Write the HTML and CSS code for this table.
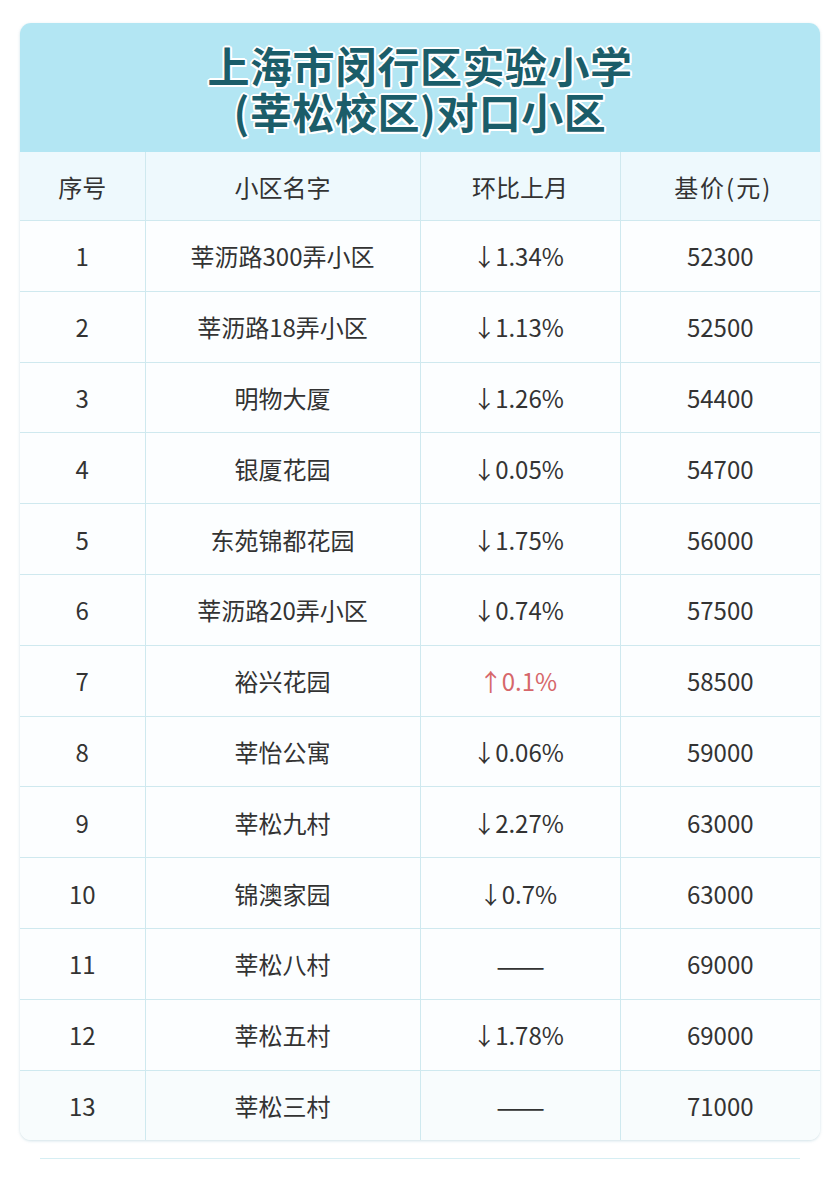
FILE: index.html
```html
<!DOCTYPE html>
<html lang="zh">
<head>
<meta charset="utf-8">
<link rel="stylesheet" href="styles.css">
</head>
<body>
<div class="page">
  <div class="card">
    <div class="title">
      <div class="title-line">上海市闵行区实验小学</div>
      <div class="title-line">(莘松校区)对口小区</div>
    </div>
    <table class="grid">
      <colgroup>
        <col class="c1"><col class="c2"><col class="c3"><col class="c4">
      </colgroup>
      <thead>
        <tr><th>序号</th><th>小区名字</th><th>环比上月</th><th class="price">基价(元)</th></tr>
      </thead>
      <tbody>
        <tr><td>1</td><td>莘沥路300弄小区</td><td><span class="arr">↓</span>1.34%</td><td>52300</td></tr>
        <tr><td>2</td><td>莘沥路18弄小区</td><td><span class="arr">↓</span>1.13%</td><td>52500</td></tr>
        <tr><td>3</td><td>明物大厦</td><td><span class="arr">↓</span>1.26%</td><td>54400</td></tr>
        <tr><td>4</td><td>银厦花园</td><td><span class="arr">↓</span>0.05%</td><td>54700</td></tr>
        <tr><td>5</td><td>东苑锦都花园</td><td><span class="arr">↓</span>1.75%</td><td>56000</td></tr>
        <tr><td>6</td><td>莘沥路20弄小区</td><td><span class="arr">↓</span>0.74%</td><td>57500</td></tr>
        <tr><td>7</td><td>裕兴花园</td><td class="up"><span class="arr">↑</span>0.1%</td><td>58500</td></tr>
        <tr><td>8</td><td>莘怡公寓</td><td><span class="arr">↓</span>0.06%</td><td>59000</td></tr>
        <tr><td>9</td><td>莘松九村</td><td><span class="arr">↓</span>2.27%</td><td>63000</td></tr>
        <tr><td>10</td><td>锦澳家园</td><td><span class="arr">↓</span>0.7%</td><td>63000</td></tr>
        <tr><td>11</td><td>莘松八村</td><td><span class="dash">——</span></td><td>69000</td></tr>
        <tr><td>12</td><td>莘松五村</td><td><span class="arr">↓</span>1.78%</td><td>69000</td></tr>
        <tr class="last"><td>13</td><td>莘松三村</td><td><span class="dash">——</span></td><td>71000</td></tr>
      </tbody>
    </table>
  </div>
  <div class="foot-line"></div>
</div>
</body>
</html>
```

FILE: styles.css
```css
html, body {
  margin: 0;
  padding: 0;
  background: #ffffff;
}
body {
  font-family: "Noto Sans CJK SC", "Noto Sans", sans-serif;
  color: #333333;
}
.page {
  width: 840px;
  padding-top: 23px;
}
.card {
  margin: 0 20px;
  width: 800px;
  border-radius: 11px;
  overflow: hidden;
  background: #fcfeff;
  box-shadow: 0 1px 3px rgba(120, 170, 185, 0.35);
}
.title {
  background: #b3e6f3;
  height: 129px;
  box-sizing: border-box;
  padding-top: 19px;
  display: flex;
  flex-direction: column;
  align-items: center;
}
.title-line {
  font-size: 42px;
  line-height: 46px;
  height: 46px;
  font-weight: 700;
  color: #1b5d69;
  letter-spacing: 0.5px;
  text-shadow:
    2px 0 0 #fff, -2px 0 0 #fff, 0 2px 0 #fff, 0 -2px 0 #fff,
    1.5px 1.5px 0 #fff, -1.5px 1.5px 0 #fff, 1.5px -1.5px 0 #fff, -1.5px -1.5px 0 #fff;
}
.grid {
  width: 800px;
  border-collapse: collapse;
  table-layout: fixed;
}
.c1 { width: 125px; }
.c2 { width: 275px; }
.c3 { width: 200px; }
.c4 { width: 200px; }
.grid th, .grid td {
  border: 1px solid #cfe9ef;
  text-align: center;
  font-size: 24px;
  font-weight: 400;
  padding: 0;
  color: #333333;
}
.grid th {
  height: 68px;
  background: #eef9fd;
  border-top: none;
}
.grid th.price {
  letter-spacing: 2px;
  text-indent: 6px;
}
.grid td {
  height: 69.8px;
}
.grid tr > :first-child { border-left: none; }
.grid tr > :last-child { border-right: none; }
.grid tr.last td { border-bottom: none; background: #f8fcfd; }
.arr {
  margin: 0 -1px 0 -4px;
}
.up { color: #d6676a !important; }
.dash {
  font-size: 29px;
  letter-spacing: -1px;
}
.foot-line {
  margin: 18px 40px 0;
  height: 1px;
  background: #d6eef3;
}
```
